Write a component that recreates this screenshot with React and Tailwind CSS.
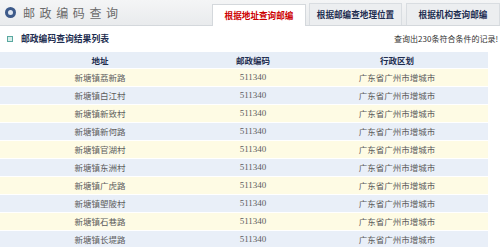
import React from 'react';

const rows = [
  '新塘镇荔新路',
  '新塘镇白江村',
  '新塘镇新致村',
  '新塘镇新何路',
  '新塘镇官湖村',
  '新塘镇东洲村',
  '新塘镇广虎路',
  '新塘镇塱陂村',
  '新塘镇石巷路',
  '新塘镇长堤路',
];

const font = { fontFamily: '"Noto Sans CJK SC", "Noto Sans", sans-serif' };

const App = () => {
  return (
    <div className="w-[500px] h-[247px] overflow-hidden bg-white text-[11px]" style={font}>
      <div className="flex items-end h-[26px] bg-gradient-to-b from-[#f4f5f6] to-[#e9ebed] border-b border-[#d4d8dc]">
        <div className="flex items-center self-center pl-[5px] w-[212px]">
          <span className="w-[11px] h-[11px] rounded-full bg-[#3d5a8a] flex items-center justify-center">
            <span className="w-[5px] h-[5px] rounded-full bg-[#dfe6f0]"></span>
          </span>
          <span className="ml-[7px] text-[12px] tracking-[4.6px] text-[#6a6a6a] leading-none">邮政编码查询</span>
        </div>
        <div className="w-[94px] h-[22px] bg-white border border-b-0 border-[#d4d8dc] flex items-center justify-center text-[#cc0000] font-bold text-[8.6px] whitespace-nowrap -mb-px">
          根据地址查询邮编
        </div>
        <div className="ml-[3px] w-[93px] h-[22px] bg-[#eceef0] border border-b-0 border-[#d9dde1] flex items-center justify-center text-[#1d2d50] font-bold text-[8.6px] whitespace-nowrap">
          根据邮编查地理位置
        </div>
        <div className="ml-[4px] w-[94px] h-[22px] bg-[#eceef0] border border-b-0 border-[#d9dde1] flex items-center justify-center text-[#1d2d50] font-bold text-[8.6px] whitespace-nowrap">
          根据机构查询邮编
        </div>
      </div>
      <div className="flex items-center h-[26px] justify-between">
        <div className="flex items-center pl-[7px]">
          <span className="w-[6px] h-[6px] border border-[#5aa8a0] bg-[#d8eeea]"></span>
          <span className="ml-[8px] font-bold text-[#1d2d50] text-[8.8px]">邮政编码查询结果列表</span>
        </div>
        <div className="text-[8px] text-[#333] whitespace-nowrap pr-[2px]">查询出230条符合条件的记录!</div>
      </div>
      <div className="w-[488px]">
        <div className="grid grid-cols-[200px_106px_182px] h-[16px] items-center bg-[#e7eef7] font-bold text-[#1d2d50] text-[8.5px]">
          <div className="text-center">地址</div>
          <div className="text-center">邮政编码</div>
          <div className="text-center">行政区划</div>
        </div>
        {rows.map((r, i) => (
          <div
            key={i}
            className={`grid grid-cols-[200px_106px_182px] h-[18px] items-center text-[#5c5c5c] text-[8.5px] border-t border-white ${i % 2 === 0 ? 'bg-[#fefbe4]' : 'bg-[#e9eff8]'}`}
          >
            <div className="text-center">{r}</div>
            <div className="text-center" style={{ fontFamily: '"Liberation Serif", serif', fontSize: '9px' }}>511340</div>
            <div className="text-center">广东省广州市增城市</div>
          </div>
        ))}
      </div>
    </div>
  );
};

export default App;
